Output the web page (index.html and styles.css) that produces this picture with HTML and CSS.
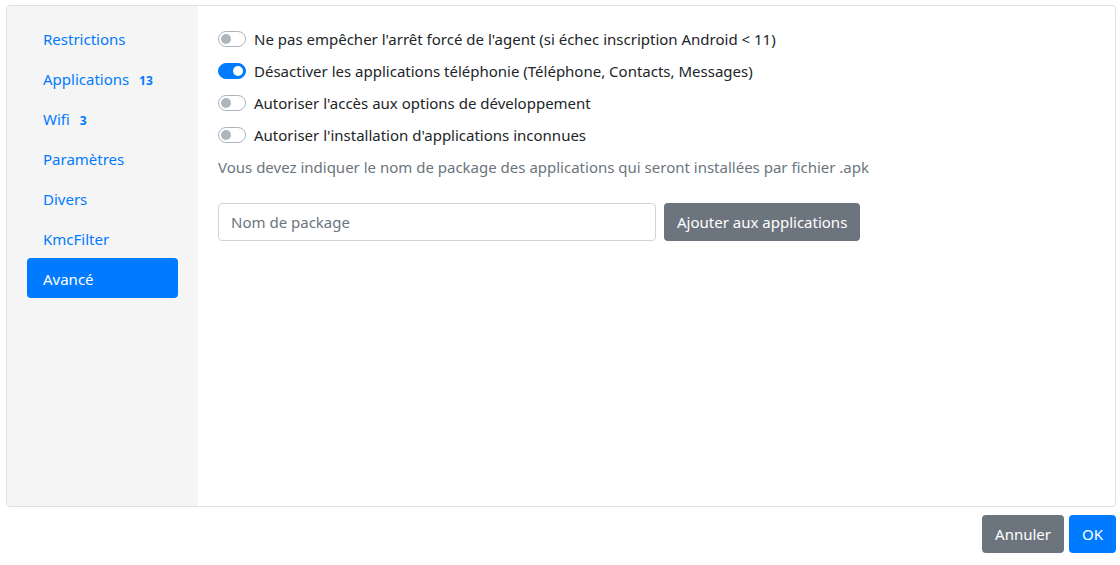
FILE: index.html
```html
<!DOCTYPE html>
<html lang="fr">
<head>
  <meta charset="UTF-8">
  <title>Paramètres avancés</title>
  <link rel="stylesheet" href="styles.css">
</head>
<body>

  <!-- Settings card -->
  <div class="panel">
    <!-- Side nav -->
    <div class="side-nav">
      <a class="nav-link">Restrictions</a>
      <a class="nav-link">Applications <span class="count">13</span></a>
      <a class="nav-link">Wifi <span class="count">3</span></a>
      <a class="nav-link">Paramètres</a>
      <a class="nav-link">Divers</a>
      <a class="nav-link">KmcFilter</a>
      <a class="nav-link active">Avancé</a>
    </div>

    <!-- Tab content -->
    <div class="tab-content">
      <label class="switch-row">
        <span class="switch"></span>
        Ne pas empêcher l'arrêt forcé de l'agent (si échec inscription Android &lt; 11)
      </label>
      <label class="switch-row">
        <span class="switch on"></span>
        Désactiver les applications téléphonie (Téléphone, Contacts, Messages)
      </label>
      <label class="switch-row">
        <span class="switch"></span>
        Autoriser l'accès aux options de développement
      </label>
      <label class="switch-row">
        <span class="switch"></span>
        Autoriser l'installation d'applications inconnues
      </label>

      <p class="help">Vous devez indiquer le nom de package des applications qui seront installées par fichier .apk</p>

      <div class="package-form">
        <input class="field" type="text" placeholder="Nom de package">
        <button class="btn btn-grey">Ajouter aux applications</button>
      </div>
    </div>
  </div>

  <!-- Footer -->
  <div class="footer">
    <button class="btn btn-grey">Annuler</button>
    <button class="btn btn-blue">OK</button>
  </div>

</body>
</html>
```

FILE: styles.css
```css
body {
  margin: 0;
  padding: 5px 4px 0 6px;
  font-family: "Segoe UI", "Noto Sans", "Liberation Sans", sans-serif;
  font-size: 15px;
  color: #212529;
  background: #fff;
}

/* Card */
.panel {
  display: flex;
  height: 500px;
  border: 1px solid #dee2e6;
  border-radius: 4px;
  overflow: hidden;
}

.side-nav {
  width: 151px;
  flex-shrink: 0;
  background: #f5f5f5;
  padding: 12px 20px 0 20px;
  display: flex;
  flex-direction: column;
}

.nav-link {
  display: block;
  height: 40px;
  box-sizing: border-box;
  padding: 2px 16px 0;
  line-height: 38px;
  color: #007bff;
  border-radius: 4px;
  cursor: pointer;
}

.nav-link .count {
  font-size: 12px;
  font-weight: 700;
  margin-left: 6px;
}

.nav-link.active {
  background: #007bff;
  color: #fff;
}

/* Content */
.tab-content {
  flex: 1;
  padding: 17px 20px 0 20px;
}

.switch-row {
  display: flex;
  align-items: center;
  gap: 8px;
  height: 32px;
  cursor: pointer;
}

.switch {
  position: relative;
  width: 26px;
  height: 14px;
  border: 1px solid #adb5bd;
  border-radius: 8px;
  background: #fff;
  flex-shrink: 0;
}

.switch::after {
  content: "";
  position: absolute;
  top: 2px;
  left: 2px;
  width: 10px;
  height: 10px;
  border-radius: 50%;
  background: #adb5bd;
}

.switch.on {
  background: #007bff;
  border-color: #007bff;
}

.switch.on::after {
  left: 14px;
  background: #fff;
}

.help {
  margin: 0;
  height: 32px;
  line-height: 32px;
  color: #6c757d;
}

.package-form {
  display: flex;
  gap: 8px;
  margin-top: 20px;
}

.field {
  width: 438px;
  height: 38px;
  box-sizing: border-box;
  padding: 6px 12px;
  border: 1px solid #ced4da;
  border-radius: 4px;
  font-family: inherit;
  font-size: 15px;
  color: #495057;
}

.field::placeholder {
  color: #6c757d;
}

.btn {
  height: 38px;
  padding: 0 13px;
  border: none;
  border-radius: 4px;
  font-family: inherit;
  font-size: 15px;
  color: #fff;
  cursor: pointer;
}

.btn-grey {
  background: #6c757d;
}

.btn-blue {
  background: #007bff;
}

.footer {
  display: flex;
  justify-content: flex-end;
  gap: 5px;
  margin-top: 8px;
}
```
